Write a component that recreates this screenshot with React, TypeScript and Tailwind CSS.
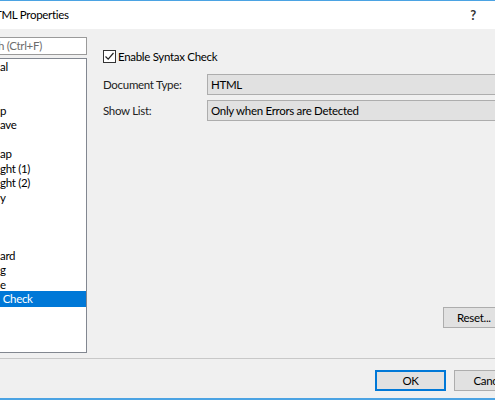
import React from "react";

const items: { t: string; sel?: boolean }[] = [
  { t: "al" },
  { t: "" },
  { t: "" },
  { t: "p" },
  { t: "ave" },
  { t: "" },
  { t: "ap" },
  { t: "ght (1)" },
  { t: "ght (2)" },
  { t: "y" },
  { t: "" },
  { t: "" },
  { t: "" },
  { t: "ard" },
  { t: "g" },
  { t: "e" },
  { t: " Check", sel: true },
];

export default function App() {
  return (
    <div
      className="w-[495px] h-[400px] overflow-hidden flex flex-col bg-[#f0f0f0] text-[11.5px] tracking-[-0.3px] text-black border-t border-b-2 border-[#4ba3e3]"
      style={{ fontFamily: 'Lato, "Noto Sans", sans-serif' }}
    >
      {/* Title bar */}
      <div className="h-[28px] bg-white flex items-center justify-between shrink-0">
        <span className="ml-[-5px] leading-none">TML Properties</span>
        <span className="mr-[19px] text-[13px] font-bold leading-none text-[#333]">?</span>
      </div>

      {/* Content */}
      <div className="h-[330px] shrink-0 flex border-b border-[#c8c8c8]">
        {/* left column */}
        <div className="w-[97px] ml-[-10px] shrink-0 flex flex-col pt-[8px]">
          <div className="h-[18px] bg-white border border-[#9a9a9a] flex items-center pl-[8px] text-[#6d6d6d] leading-none whitespace-nowrap overflow-hidden">
            <span className="ml-[-1px]">h (Ctrl+F)</span>
          </div>
          <div className="mt-[3px] h-[295px] bg-white border border-[#828790] pt-[1px] overflow-hidden">
            {items.map((it, i) => (
              <div
                key={i}
                className={
                  it.sel
                    ? "h-[16px] -mt-[1.5px] pt-[1.5px] leading-[13px] pl-[9px] bg-[#0078d7] text-white whitespace-pre"
                    : "h-[14.5px] leading-[14.5px] pl-[9px] whitespace-pre"
                }
              >
                {it.t}
              </div>
            ))}
          </div>
        </div>

        {/* right column */}
        <div className="flex-1 flex flex-col pl-[16px] pt-[21px] pb-[30px]">
          <div className="flex items-center h-[13px]">
            <div className="w-[13px] h-[13px] border border-[#333] bg-white flex items-center justify-center">
              <svg width="11" height="11" viewBox="0 0 11 11">
                <path d="M1.5 5.5 L4.2 8.2 L9.5 2" fill="none" stroke="#222" strokeWidth="1.2" />
              </svg>
            </div>
            <span className="ml-[2px] leading-none">Enable Syntax Check</span>
          </div>

          <div className="mt-[11px] flex items-center">
            <span className="w-[104px] shrink-0 text-[#222]">Document Type:</span>
            <div className="flex-1 mr-[-40px] h-[21px] bg-[#e1e1e1] border border-[#adadad] flex items-center pl-[3px]">
              HTML
            </div>
          </div>
          <div className="mt-[5px] flex items-center">
            <span className="w-[104px] shrink-0 text-[#222]">Show List:</span>
            <div className="flex-1 mr-[-40px] h-[21px] bg-[#e1e1e1] border border-[#adadad] flex items-center pl-[3px]">
              Only when Errors are Detected
            </div>
          </div>

          <div className="flex-1" />
          <div className="flex">
            <div className="ml-[340px] w-[80px] shrink-0 h-[21px] bg-[#e1e1e1] border border-[#adadad] flex items-center pl-[13px]">
              Reset...
            </div>
          </div>
        </div>
      </div>

      {/* Bottom */}
      <div className="flex-1 flex pl-[375px] pt-[11px] gap-[8px]">
        <div className="w-[71px] shrink-0 h-[21px] bg-[#e1e1e1] border-2 border-[#0078d7] flex items-center justify-center">
          OK
        </div>
        <div className="w-[71px] shrink-0 h-[21px] bg-[#e1e1e1] border border-[#adadad] flex items-center justify-center">
          Cancel
        </div>
      </div>
    </div>
  );
}
